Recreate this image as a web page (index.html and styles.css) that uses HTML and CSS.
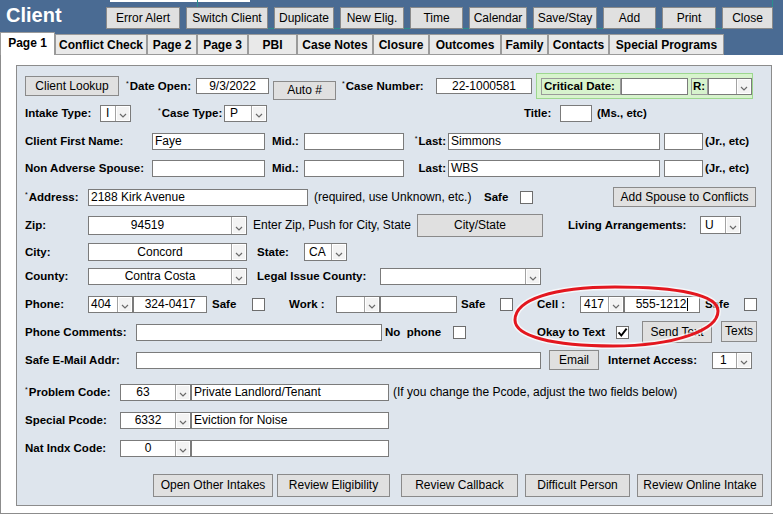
FILE: index.html
```html
<!DOCTYPE html>
<html lang="en">
<head>
<meta charset="utf-8">
<title>Client</title>
<link rel="stylesheet" href="styles.css">
</head>
<body>
<header class="topbar">
  <div class="top-strip"></div>
  <div class="focus-ring"></div>
  <div class="toolbar">
    <h1 class="title">Client</h1>
    <div class="actions">
      <button class="btn w-74">Error Alert</button>
      <button class="btn w-82">Switch Client</button>
      <button class="btn w-60">Duplicate</button>
      <button class="btn w-64">New Elig.</button>
      <button class="btn w-53">Time</button>
      <button class="btn w-58">Calendar</button>
      <button class="btn w-64">Save/Stay</button>
      <button class="btn w-53">Add</button>
      <button class="btn w-54">Print</button>
      <button class="btn w-51">Close</button>
    </div>
  </div>
  <nav class="tabs">
    <div class="tab active w-55">Page 1</div>
    <div class="tab w-92">Conflict Check</div>
    <div class="tab w-50">Page 2</div>
    <div class="tab w-51">Page 3</div>
    <div class="tab w-49">PBI</div>
    <div class="tab w-76">Case Notes</div>
    <div class="tab w-56">Closure</div>
    <div class="tab w-72">Outcomes</div>
    <div class="tab w-47">Family</div>
    <div class="tab w-61">Contacts</div>
    <div class="tab w-115">Special Programs</div>
  </nav>
</header>

<main class="content">
  <section class="panel">

    <div class="row">
      <button class="btn w-94 h20">Client Lookup</button>
      <span class="lbl w-70 ml7"><sup class="req">*</sup>Date Open:</span>
      <div class="inp w-73 h16 center">9/3/2022</div>
      <button class="btn w-63 h19 ml4 drop4">Auto #</button>
      <span class="lbl w-94 ml6"><sup class="req">*</sup>Case Number:</span>
      <div class="inp w-96 h16 center">22-1000581</div>
      <div class="crit ml4">
        <span class="crit-lbl">Critical Date:</span>
        <div class="inp w-67 h17"></div>
        <span class="crit-lbl crit-r ml3">R:</span>
        <div class="sel w-44 h17"><span class="sel-val"></span><span class="sel-arr"><svg width="8" height="5" viewBox="0 0 8 5"><path d="M1 1 L4 4 L7 1" fill="none" stroke="#6a6a6a" stroke-width="1.2"/></svg></span></div>
      </div>
    </div>

    <div class="row mt5">
      <span class="lbl w-75">Intake Type:</span>
      <div class="sel w-31 h17 left pl5"><span class="sel-val">I</span><span class="sel-arr"><svg width="8" height="5" viewBox="0 0 8 5"><path d="M1 1 L4 4 L7 1" fill="none" stroke="#6a6a6a" stroke-width="1.2"/></svg></span></div>
      <span class="lbl w-66 ml27"><sup class="req">*</sup>Case Type:</span>
      <div class="sel w-43 h17 left pl5"><span class="sel-val">P</span><span class="sel-arr"><svg width="8" height="5" viewBox="0 0 8 5"><path d="M1 1 L4 4 L7 1" fill="none" stroke="#6a6a6a" stroke-width="1.2"/></svg></span></div>
      <span class="lbl w-36 ml257">Title:</span>
      <div class="inp w-32 h17"></div>
      <span class="lbl ml5">(Ms., etc)</span>
    </div>

    <div class="row mt6">
      <span class="lbl w-127">Client First Name:</span>
      <div class="inp w-113 h17">Faye</div>
      <span class="lbl w-32 ml7">Mid.:</span>
      <div class="inp w-100 h17"></div>
      <span class="lbl w-44 right"><sup class="req">*</sup>Last:</span>
      <div class="inp w-212 h17">Simmons</div>
      <div class="inp w-39 h17 ml4"></div>
      <span class="lbl ml2">(Jr., etc)</span>
    </div>

    <div class="row mt5">
      <span class="lbl w-127">Non Adverse Spouse:</span>
      <div class="inp w-113 h17"></div>
      <span class="lbl w-32 ml7">Mid.:</span>
      <div class="inp w-100 h17"></div>
      <span class="lbl w-44 right">Last:</span>
      <div class="inp w-212 h17">WBS</div>
      <div class="inp w-39 h17 ml4"></div>
      <span class="lbl ml2">(Jr., etc)</span>
    </div>

    <div class="row mt7">
      <span class="lbl w-63"><sup class="req">*</sup>Address:</span>
      <div class="inp w-220 h17">2188 Kirk Avenue</div>
      <span class="txt w-170 ml6">(required, use Unknown, etc.)</span>
      <span class="lbl w-36">Safe</span>
      <span class="chk"></span>
      <button class="btn w-143 h20 ml80">Add Spouse to Conflicts</button>
    </div>

    <div class="row mt6">
      <span class="lbl w-63">Zip:</span>
      <div class="sel w-159 h19"><span class="sel-val pr25">94519</span><span class="sel-arr"><svg width="8" height="5" viewBox="0 0 8 5"><path d="M1 1 L4 4 L7 1" fill="none" stroke="#6a6a6a" stroke-width="1.2"/></svg></span></div>
      <span class="txt w-164 ml6">Enter Zip, Push for City, State</span>
      <button class="btn w-126 h23">City/State</button>
      <span class="lbl w-132 ml25">Living Arrangements:</span>
      <div class="sel w-41 h18 left pl4"><span class="sel-val">U</span><span class="sel-arr"><svg width="8" height="5" viewBox="0 0 8 5"><path d="M1 1 L4 4 L7 1" fill="none" stroke="#6a6a6a" stroke-width="1.2"/></svg></span></div>
    </div>

    <div class="row mt5">
      <span class="lbl w-63">City:</span>
      <div class="sel w-159 h18"><span class="sel-val">Concord</span><span class="sel-arr"><svg width="8" height="5" viewBox="0 0 8 5"><path d="M1 1 L4 4 L7 1" fill="none" stroke="#6a6a6a" stroke-width="1.2"/></svg></span></div>
      <span class="lbl w-47 ml10">State:</span>
      <div class="sel w-43 h18 left pl4"><span class="sel-val">CA</span><span class="sel-arr"><svg width="8" height="5" viewBox="0 0 8 5"><path d="M1 1 L4 4 L7 1" fill="none" stroke="#6a6a6a" stroke-width="1.2"/></svg></span></div>
    </div>

    <div class="row mt2">
      <span class="lbl w-63">County:</span>
      <div class="sel w-159 h17"><span class="sel-val">Contra Costa</span><span class="sel-arr"><svg width="8" height="5" viewBox="0 0 8 5"><path d="M1 1 L4 4 L7 1" fill="none" stroke="#6a6a6a" stroke-width="1.2"/></svg></span></div>
      <span class="lbl w-123 ml10">Legal Issue County:</span>
      <div class="sel w-161 h17"><span class="sel-val"></span><span class="sel-arr"><svg width="8" height="5" viewBox="0 0 8 5"><path d="M1 1 L4 4 L7 1" fill="none" stroke="#6a6a6a" stroke-width="1.2"/></svg></span></div>
    </div>

    <div class="row mt6">
      <span class="lbl w-63">Phone:</span>
      <div class="sel w-45 h17 left pl2"><span class="sel-val">404</span><span class="sel-arr"><svg width="8" height="5" viewBox="0 0 8 5"><path d="M1 1 L4 4 L7 1" fill="none" stroke="#6a6a6a" stroke-width="1.2"/></svg></span></div>
      <div class="inp w-74 h17 center">324-0417</div>
      <span class="lbl w-40 ml5">Safe</span>
      <span class="chk"></span>
      <span class="lbl w-47 ml24">Work :</span>
      <div class="sel w-44 h17 left"><span class="sel-val"></span><span class="sel-arr"><svg width="8" height="5" viewBox="0 0 8 5"><path d="M1 1 L4 4 L7 1" fill="none" stroke="#6a6a6a" stroke-width="1.2"/></svg></span></div>
      <div class="inp w-77 h17"></div>
      <span class="lbl w-39 ml4">Safe</span>
      <span class="chk"></span>
      <span class="lbl w-43 ml24">Cell :</span>
      <div class="sel w-44 h17 left pl3"><span class="sel-val">417</span><span class="sel-arr"><svg width="8" height="5" viewBox="0 0 8 5"><path d="M1 1 L4 4 L7 1" fill="none" stroke="#6a6a6a" stroke-width="1.2"/></svg></span></div>
      <div class="inp w-76 h17 center"><span class="caret">555-1212</span></div>
      <span class="lbl w-39 ml5">Safe</span>
      <span class="chk"></span>
    </div>

    <div class="row mt6">
      <span class="lbl w-111">Phone Comments:</span>
      <div class="inp w-246 h17"></div>
      <span class="lbl w-68 ml3">No&nbsp; phone</span>
      <span class="chk"></span>
      <span class="lbl w-79 ml71">Okay to Text</span>
      <span class="chk"><svg width="11" height="11" viewBox="0 0 11 11"><path d="M1.6 5.4 L4.3 8.6 L9.6 1.6" fill="none" stroke="#000" stroke-width="1.9"/></svg></span>
      <button class="btn w-70 h22 ml13">Send Text</button>
      <button class="btn w-36 h21 ml9 up1">Texts</button>
    </div>

    <div class="row mt6">
      <span class="lbl w-111">Safe E-Mail Addr:</span>
      <div class="inp w-405 h17"></div>
      <button class="btn w-50 h20 ml8">Email</button>
      <span class="lbl w-104 ml9">Internet Access:</span>
      <div class="sel w-40 h17 left pl7"><span class="sel-val">1</span><span class="sel-arr"><svg width="8" height="5" viewBox="0 0 8 5"><path d="M1 1 L4 4 L7 1" fill="none" stroke="#6a6a6a" stroke-width="1.2"/></svg></span></div>
    </div>

    <div class="row mt10">
      <span class="lbl w-95"><sup class="req">*</sup>Problem Code:</span>
      <div class="sel w-71 h17"><span class="sel-val pr10">63</span><span class="sel-arr"><svg width="8" height="5" viewBox="0 0 8 5"><path d="M1 1 L4 4 L7 1" fill="none" stroke="#6a6a6a" stroke-width="1.2"/></svg></span></div>
      <div class="inp w-198 h17">Private Landlord/Tenant</div>
      <span class="txt ml4">(If you change the Pcode, adjust the two fields below)</span>
    </div>

    <div class="row mt6">
      <span class="lbl w-95">Special Pcode:</span>
      <div class="sel w-71 h17"><span class="sel-val">6332</span><span class="sel-arr"><svg width="8" height="5" viewBox="0 0 8 5"><path d="M1 1 L4 4 L7 1" fill="none" stroke="#6a6a6a" stroke-width="1.2"/></svg></span></div>
      <div class="inp w-198 h17">Eviction for Noise</div>
    </div>

    <div class="row mt6">
      <span class="lbl w-95">Nat Indx Code:</span>
      <div class="sel w-71 h17"><span class="sel-val">0</span><span class="sel-arr"><svg width="8" height="5" viewBox="0 0 8 5"><path d="M1 1 L4 4 L7 1" fill="none" stroke="#6a6a6a" stroke-width="1.2"/></svg></span></div>
      <div class="inp w-198 h17"></div>
    </div>

    <div class="row mt15">
      <button class="btn w-120 h23 ml128">Open Other Intakes</button>
      <button class="btn w-113 h23 ml4">Review Eligibility</button>
      <button class="btn w-117 h23 ml11">Review Callback</button>
      <button class="btn w-105 h23 ml7">Difficult Person</button>
      <button class="btn w-126 h23 ml7">Review Online Intake</button>
    </div>

  </section>
</main>

<svg class="annot" width="226" height="78" viewBox="0 0 226 78">
  <path d="M10 40 C10 19.5 48 7 110 7 C174 7 213 15 213 31 C213 50 170 66 108 66 C47 66 10 56 10 40 Z" fill="none" stroke="#ffffff" stroke-opacity="0.7" stroke-width="6"/>
  <path d="M10 40 C10 19.5 48 7 110 7 C174 7 213 15 213 31 C213 50 170 66 108 66 C47 66 10 56 10 40 Z" fill="none" stroke="#e3171f" stroke-width="3"/>
</svg>
</body>
</html>
```

FILE: styles.css
```css
* { box-sizing: border-box; }

html, body { margin: 0; padding: 0; }

body {
  width: 783px;
  height: 514px;
  overflow: hidden;
  position: relative;
  background: #ffffff;
  color: #000000;
  font-family: "Liberation Sans", Arial, sans-serif;
  font-size: 12px;
}

/* ---------- top bar ---------- */
.topbar {
  position: relative;
  height: 55px;
  background: #4a6b93;
}

.top-strip {
  position: absolute;
  left: 110px;
  top: 0;
  width: 140px;
  height: 2px;
  background: #ffffff;
}

.focus-ring {
  position: absolute;
  left: 197px;
  top: -2px;
  width: 576px;
  height: 31px;
  border: 1px solid #2a8e8c;
}

.toolbar {
  display: flex;
  height: 34px;
}

.title {
  margin: 0;
  width: 106px;
  padding: 1px 0 0 6px;
  font-size: 20px;
  line-height: 28px;
  font-weight: bold;
  color: #ffffff;
}

.actions {
  position: relative;
  z-index: 1;
  display: flex;
  gap: 6px;
  padding-top: 7px;
  height: 29px;
}

.actions .btn { height: 22px; }

.btn {
  flex: none;
  display: flex;
  align-items: center;
  justify-content: center;
  margin: 0;
  padding: 0;
  height: 22px;
  background: #e0e0e0;
  border: 1px solid #8a8a8a;
  border-radius: 0;
  font-family: inherit;
  font-size: 12px;
  color: #000000;
  white-space: nowrap;
}

/* ---------- tabs ---------- */
.tabs {
  display: flex;
  align-items: flex-end;
  height: 21px;
}

.tab {
  flex: none;
  display: flex;
  align-items: center;
  justify-content: center;
  height: 21px;
  background: #e9e9e9;
  border: 1px solid #9a9a9a;
  font-weight: bold;
  white-space: nowrap;
}

.tab.active {
  height: 23px;
  background: #ffffff;
  border-bottom: none;
  padding-bottom: 2px;
}

/* ---------- content ---------- */
.content {
  width: 773px;
  height: 459px;
  border-left: 1px solid #8c8c8c;
  border-bottom: 1px solid #8c8c8c;
  padding: 10px 0 0 15px;
}

.panel {
  width: 756px;
  height: 441px;
  border: 1px solid #8c8c8c;
  background: #dee5ed;
  padding: 9px 0 0 8px;
}

.row {
  display: flex;
  align-items: center;
  height: 22px;
  white-space: nowrap;
}

.row > * { flex: none; }

.lbl { font-weight: bold; font-size: 11.5px; white-space: nowrap; }
.txt { white-space: nowrap; }
.right { text-align: right; padding-right: 2px; }

.req {
  font-size: 7px;
  font-weight: normal;
  vertical-align: top;
  line-height: 1;
  margin-right: 1px;
}

.inp {
  display: flex;
  align-items: center;
  height: 17px;
  background: #ffffff;
  border: 1px solid #7b7b7b;
  padding: 0 2px;
  overflow: hidden;
  white-space: nowrap;
}

.inp.center { justify-content: center; }

.caret::after {
  content: "";
  display: inline-block;
  width: 1px;
  height: 13px;
  margin-left: 1px;
  background: #000000;
  vertical-align: middle;
}

.sel {
  display: flex;
  height: 17px;
  background: #ffffff;
  border: 1px solid #7b7b7b;
  overflow: hidden;
}

.sel-val {
  flex: 1;
  display: flex;
  align-items: center;
  justify-content: center;
  white-space: nowrap;
}

.sel.left .sel-val { justify-content: flex-start; }

.sel-arr {
  flex: none;
  width: 15px;
  display: flex;
  align-items: flex-end;
  justify-content: center;
  padding-bottom: 3px;
  background: #f3f3f3;
  border-left: 1px solid #a3a3a3;
  box-shadow: inset 0 0 0 1px #ffffff;
}

.chk {
  display: flex;
  align-items: center;
  justify-content: center;
  width: 13px;
  height: 13px;
  background: #ffffff;
  border: 1px solid #6d6d6d;
}

.crit {
  display: flex;
  align-items: center;
  width: 217px;
  height: 26px;
  border: 1px solid #9dd78f;
  background: #d7f3cd;
  padding-left: 4px;
}

.crit > * { flex: none; }

.crit-lbl {
  width: 80px;
  height: 17px;
  line-height: 15px;
  border: 1px solid #9a9a9a;
  padding-left: 2px;
  font-weight: bold;
  font-size: 11.5px;
  white-space: nowrap;
}

.crit-r { width: 17px; padding-left: 1px; }

.annot {
  position: absolute;
  left: 505px;
  top: 280px;
  pointer-events: none;
}

/* ---------- shifts ---------- */
.drop4 { margin-top: 8px; }
.up1 { margin-bottom: 2px; }

/* ---------- heights ---------- */
.h16 { height: 16px; }
.h17 { height: 17px; }
.h18 { height: 18px; }
.h19 { height: 19px; }
.h20 { height: 20px; }
.h21 { height: 21px; }
.h22 { height: 22px; }
.h23 { height: 23px; }

/* ---------- widths ---------- */
.w-31 { width: 31px; }
.w-32 { width: 32px; }
.w-36 { width: 36px; }
.w-39 { width: 39px; }
.w-40 { width: 40px; }
.w-41 { width: 41px; }
.w-43 { width: 43px; }
.w-44 { width: 44px; }
.w-45 { width: 45px; }
.w-47 { width: 47px; }
.w-49 { width: 49px; }
.w-50 { width: 50px; }
.w-51 { width: 51px; }
.w-53 { width: 53px; }
.w-54 { width: 54px; }
.w-55 { width: 55px; }
.w-56 { width: 56px; }
.w-58 { width: 58px; }
.w-60 { width: 60px; }
.w-61 { width: 61px; }
.w-62 { width: 62px; }
.w-63 { width: 63px; }
.w-64 { width: 64px; }
.w-66 { width: 66px; }
.w-67 { width: 67px; }
.w-68 { width: 68px; }
.w-70 { width: 70px; }
.w-71 { width: 71px; }
.w-72 { width: 72px; }
.w-73 { width: 73px; }
.w-74 { width: 74px; }
.w-75 { width: 75px; }
.w-76 { width: 76px; }
.w-77 { width: 77px; }
.w-79 { width: 79px; }
.w-82 { width: 82px; }
.w-92 { width: 92px; }
.w-94 { width: 94px; }
.w-95 { width: 95px; }
.w-96 { width: 96px; }
.w-100 { width: 100px; }
.w-104 { width: 104px; }
.w-105 { width: 105px; }
.w-111 { width: 111px; }
.w-113 { width: 113px; }
.w-115 { width: 115px; }
.w-117 { width: 117px; }
.w-120 { width: 120px; }
.w-123 { width: 123px; }
.w-126 { width: 126px; }
.w-127 { width: 127px; }
.w-132 { width: 132px; }
.w-143 { width: 143px; }
.w-159 { width: 159px; }
.w-161 { width: 161px; }
.w-164 { width: 164px; }
.w-170 { width: 170px; }
.w-198 { width: 198px; }
.w-212 { width: 212px; }
.w-220 { width: 220px; }
.w-246 { width: 246px; }
.w-405 { width: 405px; }

/* ---------- margins / padding ---------- */
.ml2 { margin-left: 2px; }
.ml3 { margin-left: 3px; }
.ml4 { margin-left: 4px; }
.ml5 { margin-left: 5px; }
.ml6 { margin-left: 6px; }
.ml7 { margin-left: 7px; }
.ml8 { margin-left: 8px; }
.ml9 { margin-left: 9px; }
.ml10 { margin-left: 10px; }
.ml11 { margin-left: 11px; }
.ml13 { margin-left: 13px; }
.ml24 { margin-left: 24px; }
.ml25 { margin-left: 25px; }
.ml27 { margin-left: 27px; }
.ml71 { margin-left: 71px; }
.ml80 { margin-left: 80px; }
.ml128 { margin-left: 128px; }
.ml257 { margin-left: 257px; }

.mt2 { margin-top: 2px; }
.mt5 { margin-top: 5px; }
.mt6 { margin-top: 6px; }
.mt7 { margin-top: 7px; }
.mt10 { margin-top: 10px; }
.mt15 { margin-top: 15px; }

.pl2 .sel-val { padding-left: 2px; }
.pl3 .sel-val { padding-left: 3px; }
.pl4 .sel-val { padding-left: 4px; }
.pl5 .sel-val { padding-left: 5px; }
.pl7 .sel-val { padding-left: 7px; }
.pr10 { padding-right: 10px; }
.pr25 { padding-right: 25px; }
```
